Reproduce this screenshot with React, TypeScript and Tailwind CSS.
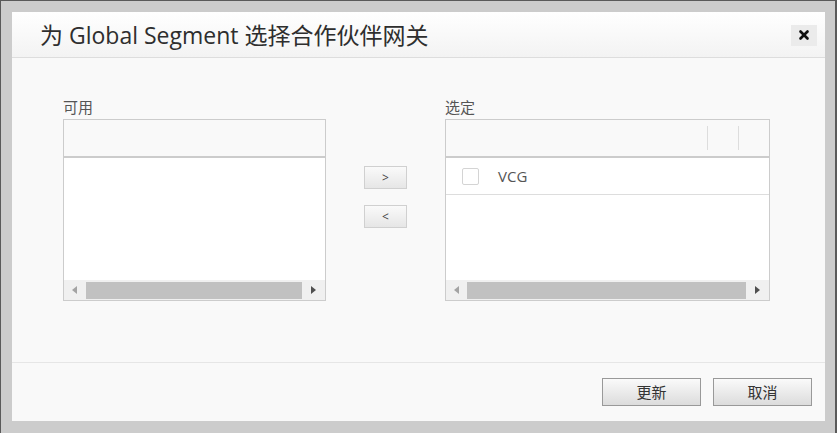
import { X } from "lucide-react";

const font = { fontFamily: '"Open Sans", "Noto Sans CJK SC", sans-serif' };

function ScrollBar({ thumbLeft, thumbRight }: { thumbLeft: number; thumbRight: number }) {
  return (
    <div className="mt-auto h-[20px] bg-[#f0f0f0] flex items-center relative">
      <span className="absolute left-[8px] top-[6px] w-0 h-0 border-y-[4px] border-y-transparent border-r-[5px] border-r-[#a3a3a3]" />
      <div
        className="absolute top-[2px] h-[17px] bg-[#c1c1c1]"
        style={{ left: thumbLeft, right: thumbRight }}
      />
      <span className="absolute right-[9px] top-[6px] w-0 h-0 border-y-[4px] border-y-transparent border-l-[5px] border-l-[#505050]" />
    </div>
  );
}

export default function App() {
  return (
    <div className="w-[837px] h-[433px] bg-[#cccccc] border-l border-t border-r-2 border-[#5a5a5a] overflow-hidden" style={font}>
      <div className="ml-[11px] mt-[11px] w-[813px] h-[409px] bg-[#f9f9f9] flex flex-col">
        {/* Header */}
        <div className="h-[46px] shrink-0 border-b border-[#dddddd] bg-gradient-to-b from-white to-[#f3f3f3] flex items-center justify-between pl-[28px] pr-[8px]">
          <h1 className="text-[23px] text-[#2e2e2e] leading-none mt-[1px]">为 Global Segment 选择合作伙伴网关</h1>
          <button className="w-[26px] h-[21px] bg-[#ebebeb] flex items-center justify-center mt-[1px]">
            <X className="w-[14px] h-[14px] text-[#111]" strokeWidth={4.5} />
          </button>
        </div>

        {/* Body */}
        <div className="flex-1 flex pl-[51px] pt-[41px] text-[15px] text-[#555]">
          <div className="w-[263px] flex flex-col">
            <div className="h-[20px] leading-[17px]">可用</div>
            <div className="h-[182px] border border-[#cccccc] bg-white flex flex-col">
              <div className="h-[38px] bg-[#f9f9f9] border-b-2 border-[#cccccc]" />
              <ScrollBar thumbLeft={22} thumbRight={23} />
            </div>
          </div>

          <div className="ml-[38px] mt-[67px] flex flex-col gap-[16px]">
            <button className="w-[43px] h-[23px] border border-[#d0d0d0] bg-gradient-to-b from-[#fafafa] to-[#e6e6e6] text-[12px] text-[#444] leading-none flex items-center justify-center">
              &gt;
            </button>
            <button className="w-[43px] h-[23px] border border-[#d0d0d0] bg-gradient-to-b from-[#fafafa] to-[#e6e6e6] text-[12px] text-[#444] leading-none flex items-center justify-center">
              &lt;
            </button>
          </div>

          <div className="ml-[38px] w-[325px] flex flex-col">
            <div className="h-[20px] leading-[17px]">选定</div>
            <div className="h-[182px] border border-[#cccccc] bg-white flex flex-col">
              <div className="h-[38px] bg-[#f9f9f9] border-b-2 border-[#cccccc] flex items-center justify-end pr-[30px] gap-[30px]">
                <span className="w-px h-[24px] bg-[#dddddd]" />
                <span className="w-px h-[24px] bg-[#dddddd]" />
              </div>
              <div className="h-[37px] border-b border-[#dddddd] flex items-center pl-[16px]">
                <span className="w-[17px] h-[17px] border border-[#d4d4d4] rounded-[2px] bg-white" />
                <span className="ml-[19px] text-[15px] text-[#555] mt-[1px]">VCG</span>
              </div>
              <ScrollBar thumbLeft={21} thumbRight={23} />
            </div>
          </div>
        </div>

        {/* Footer */}
        <div className="h-[59px] shrink-0 border-t border-[#e6e6e6] flex justify-end items-start pt-[15px] pr-[13px] gap-[12px]">
          <button className="w-[99px] h-[28px] border border-[#999999] bg-gradient-to-b from-[#fafafa] to-[#dcdcdc] text-[15px] text-[#333]">
            更新
          </button>
          <button className="w-[99px] h-[28px] border border-[#999999] bg-gradient-to-b from-[#fafafa] to-[#dcdcdc] text-[15px] text-[#333]">
            取消
          </button>
        </div>
      </div>
    </div>
  );
}
